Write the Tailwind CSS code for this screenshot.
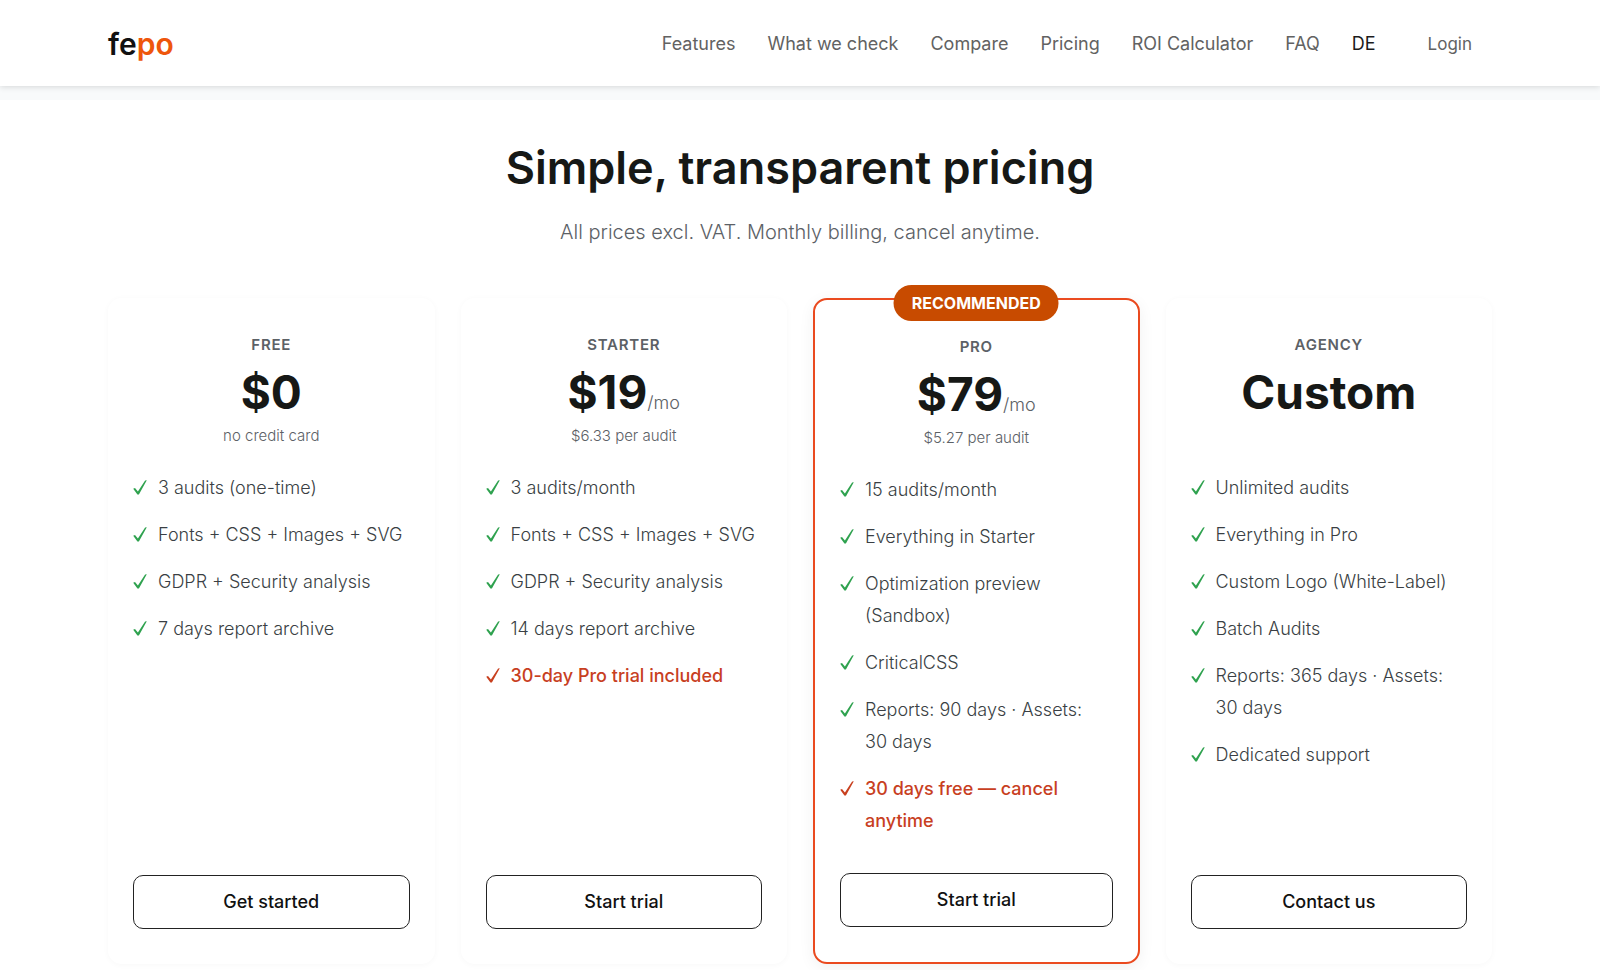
<!DOCTYPE html>
<html lang="en">
<head>
    <meta charset="UTF-8">
    <meta name="viewport" content="width=device-width, initial-scale=1.0">
    <title>fepo - Pricing</title>
    <script src="https://cdn.jsdelivr.net/npm/@tailwindcss/browser@4"></script>
</head>
<body class="bg-[#f8fafb] min-h-screen font-['Inter',sans-serif] text-[#161816]">
    <svg class="hidden" aria-hidden="true">
        <symbol id="check" viewBox="0 0 14 15">
            <path d="M0.2 8.8 L2 8 L4.9 11.6 L12.1 0.6 L13.8 0.2 L5.9 14.5 L4.4 14.5 Z" fill="currentColor" />
        </symbol>
    </svg>

    <header class="relative bg-white shadow-[0_1px_6px_rgba(0,0,0,0.14)]">
        <div class="max-w-[1384px] h-[86px] pt-0.5 mx-auto flex items-center justify-between">
            <a href="#" class="text-3xl font-semibold text-[#111]">fe<span class="text-[#ee560c]">po</span></a>
            <nav class="flex items-center gap-8 text-lg text-[#626262]">
                <a href="#features">Features</a>
                <a href="#checks">What we check</a>
                <a href="#compare">Compare</a>
                <a href="#pricing">Pricing</a>
                <a href="#roi">ROI Calculator</a>
                <a href="#faq">FAQ</a>
                <a href="#de" class="text-[#1c1c1c]">DE</a>
                <a href="#login" class="px-5 text-[17px]">Login</a>
            </nav>
        </div>
    </header>

    <main id="pricing" class="mt-[14px] bg-white pt-9 pb-2">
        <h1 class="text-center text-[45px] leading-[64px] font-semibold">Simple, transparent pricing</h1>
        <p class="mt-4 text-center text-xl leading-8 font-light text-[#5c6166]">All prices excl. VAT. Monthly billing, cancel anytime.</p>

        <div class="max-w-[1384px] mx-auto mt-[50px] grid grid-cols-4 gap-[26px]">
            <!-- Free -->
            <section class="flex flex-col px-[25px] py-[35px] rounded-[14px] shadow-[0_1px_6px_rgba(0,0,0,0.03)]">
                <h2 class="text-center text-[15px] leading-6 font-semibold tracking-wider text-[#5c6166]">FREE</h2>
                <div class="mt-[5px] text-center text-[46px] leading-[60px] font-bold">$0</div>
                <div class="h-[26px] text-center text-[15px] leading-7 font-light text-[#5c6166]">no credit card</div>
                <ul class="mt-6 mb-9 flex flex-col gap-[15px] text-lg leading-8 font-light text-[#3a3f44]">
                    <li class="flex gap-[11px]"><svg class="w-[14px] h-[15px] mt-2 shrink-0 text-[#2fa24f]"><use href="#check" /></svg>3 audits (one-time)</li>
                    <li class="flex gap-[11px]"><svg class="w-[14px] h-[15px] mt-2 shrink-0 text-[#2fa24f]"><use href="#check" /></svg>Fonts + CSS + Images + SVG</li>
                    <li class="flex gap-[11px]"><svg class="w-[14px] h-[15px] mt-2 shrink-0 text-[#2fa24f]"><use href="#check" /></svg>GDPR + Security analysis</li>
                    <li class="flex gap-[11px]"><svg class="w-[14px] h-[15px] mt-2 shrink-0 text-[#2fa24f]"><use href="#check" /></svg>7 days report archive</li>
                </ul>
                <button type="button" class="mt-auto w-full h-[54px] border border-[#222] rounded-[10px] text-lg font-medium text-[#111]">Get started</button>
            </section>

            <!-- Starter -->
            <section class="flex flex-col px-[25px] py-[35px] rounded-[14px] shadow-[0_1px_6px_rgba(0,0,0,0.03)]">
                <h2 class="text-center text-[15px] leading-6 font-semibold tracking-wider text-[#5c6166]">STARTER</h2>
                <div class="mt-[5px] text-center text-[46px] leading-[60px] font-bold">$19<span class="text-lg font-light text-[#5c6166]">/mo</span></div>
                <div class="h-[26px] text-center text-[15px] leading-7 font-light text-[#5c6166]">$6.33 per audit</div>
                <ul class="mt-6 mb-9 flex flex-col gap-[15px] text-lg leading-8 font-light text-[#3a3f44]">
                    <li class="flex gap-[11px]"><svg class="w-[14px] h-[15px] mt-2 shrink-0 text-[#2fa24f]"><use href="#check" /></svg>3 audits/month</li>
                    <li class="flex gap-[11px]"><svg class="w-[14px] h-[15px] mt-2 shrink-0 text-[#2fa24f]"><use href="#check" /></svg>Fonts + CSS + Images + SVG</li>
                    <li class="flex gap-[11px]"><svg class="w-[14px] h-[15px] mt-2 shrink-0 text-[#2fa24f]"><use href="#check" /></svg>GDPR + Security analysis</li>
                    <li class="flex gap-[11px]"><svg class="w-[14px] h-[15px] mt-2 shrink-0 text-[#2fa24f]"><use href="#check" /></svg>14 days report archive</li>
                    <li class="flex gap-[11px] font-medium text-[#c8401f]"><svg class="w-[14px] h-[15px] mt-2 shrink-0"><use href="#check" /></svg>30-day Pro trial included</li>
                </ul>
                <button type="button" class="mt-auto w-full h-[54px] border border-[#222] rounded-[10px] text-lg font-medium text-[#111]">Start trial</button>
            </section>

            <!-- Pro -->
            <section class="relative flex flex-col px-[25px] py-[35px] border-2 border-[#ea4a1f] rounded-[14px] shadow-[0_4px_16px_rgba(0,0,0,0.06)]">
                <span class="absolute -top-[15px] left-1/2 -translate-x-1/2 px-[18px] rounded-full bg-[#c84b00] text-base leading-9 font-bold text-white">RECOMMENDED</span>
                <h2 class="text-center text-[15px] leading-6 font-semibold tracking-wider text-[#5c6166]">PRO</h2>
                <div class="mt-[5px] text-center text-[46px] leading-[60px] font-bold">$79<span class="text-lg font-light text-[#5c6166]">/mo</span></div>
                <div class="h-[26px] text-center text-[15px] leading-7 font-light text-[#5c6166]">$5.27 per audit</div>
                <ul class="mt-6 mb-9 flex flex-col gap-[15px] text-lg leading-8 font-light text-[#3a3f44]">
                    <li class="flex gap-[11px]"><svg class="w-[14px] h-[15px] mt-2 shrink-0 text-[#2fa24f]"><use href="#check" /></svg>15 audits/month</li>
                    <li class="flex gap-[11px]"><svg class="w-[14px] h-[15px] mt-2 shrink-0 text-[#2fa24f]"><use href="#check" /></svg>Everything in Starter</li>
                    <li class="flex gap-[11px]"><svg class="w-[14px] h-[15px] mt-2 shrink-0 text-[#2fa24f]"><use href="#check" /></svg>Optimization preview (Sandbox)</li>
                    <li class="flex gap-[11px]"><svg class="w-[14px] h-[15px] mt-2 shrink-0 text-[#2fa24f]"><use href="#check" /></svg>CriticalCSS</li>
                    <li class="flex gap-[11px]"><svg class="w-[14px] h-[15px] mt-2 shrink-0 text-[#2fa24f]"><use href="#check" /></svg>Reports: 90 days · Assets: 30&nbsp;days</li>
                    <li class="flex gap-[11px] font-medium text-[#c8401f]"><svg class="w-[14px] h-[15px] mt-2 shrink-0"><use href="#check" /></svg>30 days free — cancel anytime</li>
                </ul>
                <button type="button" class="mt-auto w-full h-[54px] border border-[#222] rounded-[10px] text-lg font-medium text-[#111]">Start trial</button>
            </section>

            <!-- Agency -->
            <section class="flex flex-col px-[25px] py-[35px] rounded-[14px] shadow-[0_1px_6px_rgba(0,0,0,0.03)]">
                <h2 class="text-center text-[15px] leading-6 font-semibold tracking-wider text-[#5c6166]">AGENCY</h2>
                <div class="mt-[5px] text-center text-[46px] leading-[60px] font-bold">Custom</div>
                <div class="h-[26px]"></div>
                <ul class="mt-6 mb-9 flex flex-col gap-[15px] text-lg leading-8 font-light text-[#3a3f44]">
                    <li class="flex gap-[11px]"><svg class="w-[14px] h-[15px] mt-2 shrink-0 text-[#2fa24f]"><use href="#check" /></svg>Unlimited audits</li>
                    <li class="flex gap-[11px]"><svg class="w-[14px] h-[15px] mt-2 shrink-0 text-[#2fa24f]"><use href="#check" /></svg>Everything in Pro</li>
                    <li class="flex gap-[11px]"><svg class="w-[14px] h-[15px] mt-2 shrink-0 text-[#2fa24f]"><use href="#check" /></svg>Custom Logo (White-Label)</li>
                    <li class="flex gap-[11px]"><svg class="w-[14px] h-[15px] mt-2 shrink-0 text-[#2fa24f]"><use href="#check" /></svg>Batch Audits</li>
                    <li class="flex gap-[11px]"><svg class="w-[14px] h-[15px] mt-2 shrink-0 text-[#2fa24f]"><use href="#check" /></svg>Reports: 365 days · Assets: 30&nbsp;days</li>
                    <li class="flex gap-[11px]"><svg class="w-[14px] h-[15px] mt-2 shrink-0 text-[#2fa24f]"><use href="#check" /></svg>Dedicated support</li>
                </ul>
                <button type="button" class="mt-auto w-full h-[54px] border border-[#222] rounded-[10px] text-lg font-medium text-[#111]">Contact us</button>
            </section>
        </div>
    </main>
</body>
</html>
